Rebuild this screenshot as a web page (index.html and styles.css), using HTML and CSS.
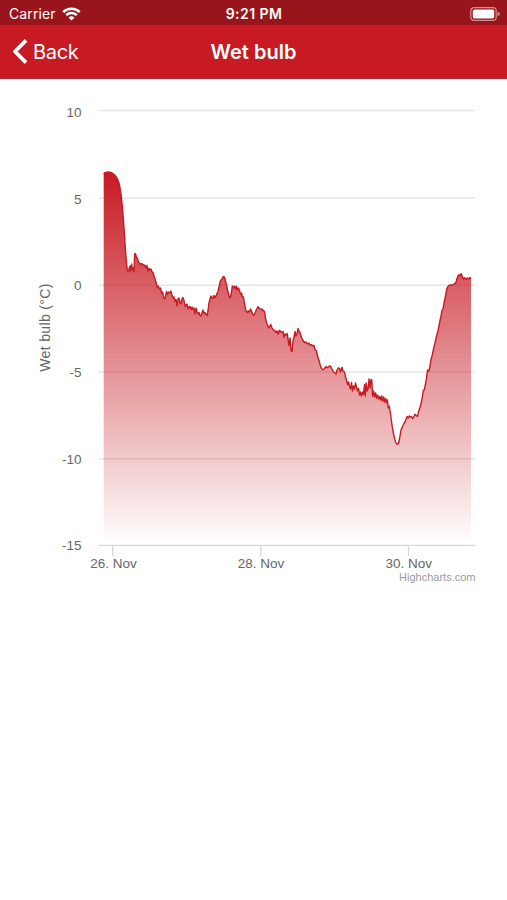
FILE: index.html
```html
<!DOCTYPE html>
<html lang="en">
<head>
  <meta charset="UTF-8" />
  <meta name="viewport" content="width=device-width, initial-scale=1.0" />
  <title>Wet bulb</title>
  <link rel="stylesheet" href="styles.css">
</head>
<body>

  <!-- Status bar -->
  <div class="status-bar">
    <div class="carrier">
      <span>Carrier</span>
      <svg class="wifi" width="19" height="14" viewBox="0 0 19 14">
        <path d="M1.2 5.1 A11.8 11.8 0 0 1 17.8 5.1" />
        <path d="M4.2 8.1 A7.6 7.6 0 0 1 14.8 8.1" />
        <path class="wifi-dot" d="M6.5 10.6 A4.3 4.3 0 0 1 12.5 10.6 L9.5 13.6 Z" />
      </svg>
    </div>
    <span class="clock">9:21 PM</span>
    <svg class="battery" width="31" height="14" viewBox="0 0 31 14">
      <rect class="battery-case" x="0.8" y="0.7" width="25.4" height="12.6" rx="3.4" />
      <rect x="2.8" y="2.6" width="21.4" height="8.8" rx="1.6" />
      <path class="battery-tip" d="M27.5 4.8 Q29.9 5.4 29.9 7 Q29.9 8.6 27.5 9.2 Z" />
    </svg>
  </div>

  <header class="nav-bar">
    <a class="back" href="#">
      <svg width="17" height="27" viewBox="0 0 17 27">
        <path d="M14 2.4 L3 13.5 L14 24.6" />
      </svg>
      <span>Back</span>
    </a>
    <h1>Wet bulb</h1>
  </header>

  <main>
    <svg class="chart" width="507" height="521" viewBox="0 79 507 521">
      <defs>
        <linearGradient id="fill" gradientUnits="userSpaceOnUse" x1="0" y1="172" x2="0" y2="545">
          <stop offset="0" stop-color="#c71a22" />
          <stop offset="1" stop-color="#c71a22" stop-opacity="0" />
        </linearGradient>
      </defs>

      <path class="grid" d="M99 110.5H475 M99 198.2H475 M99 285.2H475 M99 372H475 M99 458.7H475" />

      <path id="area" class="area" />
      <path id="line" class="line" />

      <path class="axis" d="M99 545.3H475 M112.7 545V556 M260.8 545V556 M408.5 545V556" />

      <g class="y-labels">
        <text x="81.5" y="117">10</text>
        <text x="81.5" y="203.5">5</text>
        <text x="81.5" y="290">0</text>
        <text x="81.5" y="377">-5</text>
        <text x="81.5" y="463.5">-10</text>
        <text x="81.5" y="550">-15</text>
      </g>
      <g class="x-labels">
        <text x="113.5" y="567.5">26. Nov</text>
        <text x="261" y="567.5">28. Nov</text>
        <text x="408.7" y="567.5">30. Nov</text>
      </g>
      <text class="axis-title" transform="translate(50 371.7) rotate(-90)" textLength="88">Wet bulb (°C)</text>
      <text class="credits" x="475.5" y="581">Highcharts.com</text>
    </svg>
  </main>

  <script>
    // x,y of each reading
    const points = `
      103.7,174 105,172.6 108,171.9 111,172.4 114,174.5 116,176.5 118,180 119.5,185
      121,194 122.3,206 123.5,220 124.5,236 125.5,251 126.5,263 127.3,270 128.3,272
      129.3,268 130,266 130.8,271 131.6,264 132.4,269 133.3,268 134,271.5 134.6,254
      135.4,253.5 136.3,257 137.3,258 138.4,262 139.4,263 140.6,264.5 141.6,263.5
      143,264.3 144,266 145,265 146,268 147,265.5 148,271 149,268.5 150,270 151,269
      152,272 153,272.5 154,276 155,279 156.2,283 157.2,287.5 158.2,286 159.5,289
      160.5,288 161.5,293 162.5,292 163.5,296 164.5,299 165.5,297 166.5,291.5
      167.5,294 168.5,292 169.8,293 171,291.2 172,295 173,297.5 174,297 175,301
      176,299.5 177,306 178,299 179,298 180,302.5 181,304 182,299 183,297.5
      184,300.5 185,306.5 186,305 187,304 188,309 189,307 190,306.5 191,309.5
      192,307 193,309.5 194,308 195,314 196,308 197,312 198,314 199,312.5 200,315.5
      201,316 202,313 203,310 204,313.5 205,312.5 206,314.5 207,315.5 208,311
      209,303 210,299 211,296 212,297.5 213,298.5 214,295.5 215,297.5 216,296
      217,293.5 218,291.5 219,287 220,282 221,279.8 222,279.2 223,276.8 224.5,277
      225.5,281 226.5,285 227.5,290 228.5,294 229.5,297.5 230.5,297 231.5,292
      232.3,286 233.5,288 234.5,286 235.5,289 236.5,286.3 237.5,290 238.5,288
      239.5,290.5 240.5,294 241.5,293 242.5,297 243.5,297 244.5,304 245.5,309
      246.5,311.5 247.5,312.5 248.5,311 249.5,312 250.5,309 251.5,311 252.5,314
      253.8,315.5 255,313 256,310.5 257,308.5 258,306.8 259.5,308.5 261,309.5
      262,309 263,310.5 264,311 264.8,313 265.6,319 266.6,323 267.6,325 268.6,328
      269.8,326.5 270.8,324.5 271.8,327.5 273,329.5 274.5,330.5 276,332.5 277,331
      278.2,334 279.2,330.5 280.3,331 281.5,332.3 283,331.5 284,337 285,334
      286,335 287.2,333.5 288,339 289,345.5 290,338 291,350.5 292,351.5 293,341
      294,337 295,331.5 296,336 297,334 298,328.5 299,331 300,332.5 301,336
      302,338.5 303,340.5 304.5,342.5 306,342 307.5,344 309,343 310,345.5
      311.5,344.5 313,346 314,345.5 315,349.5 316.5,351 317.5,356 319,360.5
      320.2,365 321.5,368.5 323,369.7 324.5,368.5 326,366.5 327.5,367.7 329,366.5
      330.5,366 332,369 333.5,372 335,373 336,374 337,370 338.3,367.8 339.5,368.5
      340.5,372 342,367.3 343,371 344.5,372 345.5,377 346.5,380 347.5,384.5
      348.5,382 349.5,386 350.5,389 351.5,382.5 352.5,391 353.5,386 354.5,389
      355.5,383 356.5,387 357.5,391 358.5,388.5 359.5,395 360.5,392 361.5,396
      362.5,392 363.5,394.5 364.5,384.5 365.3,396 366.2,383 367.2,391 368.2,388
      369,379 370,388 371,379.5 371.8,380 372.6,396 373.6,391 374.6,397 375.6,393
      376.6,398 377.6,395 378.6,399 379.6,396.5 380.6,400 381.6,396 382.6,401
      383.6,397 384.6,402 385.6,398.5 386.6,403 387.4,400 388.2,408 389.2,406
      390.2,412 391.2,419 392,425 393,431 394.2,437 395.6,442 397,444.3 398.5,443.5
      399.7,438 401,430 402.3,427 403.7,424 405,422 406,419.5 407.2,416.5
      408.3,418 409.3,416 410.3,417 411.3,416.5 412.5,418.5 414,416.5 415,414.3
      416.2,415.5 417.5,416.5 418.5,412 419.8,408 421,404 422.2,398 423.3,390.5
      424.3,390 425.5,384 426.5,378 427.5,370 429,371 430,366 431,359.5 432.3,355
      433.5,349 435,343 436.5,336 438,331 439.5,323 441,316 442,310.5 443.2,308
      444.2,302 445.5,296 446.5,290.5 447.5,287 449,285.5 451,285 453,284.8
      454.5,283.5 455.7,283.3 457,278.5 458,276 459,274.8 460,276 461.3,273.7
      462.3,276.5 463.5,279 464.7,277.8 466,279.3 467.5,278 469,279 470,277.5
      471,278.8`.trim().split(/\s+/);

    const d = 'M' + points.join(' L');
    document.getElementById('line').setAttribute('d', d);
    document.getElementById('area').setAttribute('d', d + ' L471,545 L103.7,545 Z');
  </script>
</body>
</html>
```
FILE: styles.css
```css
* { box-sizing: border-box; margin: 0; padding: 0; }

body {
  background: white;
  font-family: Inter, sans-serif;
  color: white;
}

.status-bar {
  display: grid;
  grid-template-columns: 1fr auto 1fr;
  align-items: center;
  height: 25px;
  padding: 2px 6px 0 7px;
  background: #98161b;
  font-size: 14px;
}

.carrier {
  display: flex;
  align-items: center;
  gap: 6px;
  padding-left: 2px;
  letter-spacing: 0.1px;
}

.wifi {
  fill: none;
  stroke: white;
  stroke-width: 2.4;
}

.wifi-dot {
  fill: white;
  stroke: none;
}

.clock {
  font-size: 14px;
  font-weight: 600;
  letter-spacing: 0.45px;
}

.battery {
  justify-self: end;
  fill: white;
}

.battery-case {
  fill: none;
  stroke: #d58d91;
  stroke-width: 1.2;
}

.battery-tip {
  fill: #d58d91;
}

.nav-bar {
  display: grid;
  grid-template-columns: 1fr auto 1fr;
  align-items: center;
  height: 54px;
  padding: 0 12px;
  background: #c71a22;
  border-bottom: 1px solid #b8242b;
}

.back {
  display: flex;
  align-items: center;
  gap: 4px;
  color: white;
  font-size: 20px;
  letter-spacing: -0.3px;
  text-decoration: none;
}

.back svg {
  fill: none;
  stroke: white;
  stroke-width: 3.8;
  stroke-linejoin: round;
}

h1 {
  font-size: 20px;
  font-weight: 600;
}

.chart {
  display: block;
  font-family: "Liberation Sans", Arial, sans-serif;
  font-size: 13.5px;
  fill: #666;
}

.grid {
  stroke: #e6e6e6;
  stroke-width: 1.4;
}

.area {
  fill: url(#fill);
}

.line {
  fill: none;
  stroke: #c71a22;
  stroke-width: 1.4;
  stroke-linejoin: round;
}

.axis {
  fill: none;
  stroke: #d3d6ee;
  stroke-width: 1.3;
}

.y-labels {
  text-anchor: end;
}

.x-labels {
  text-anchor: middle;
}

.axis-title {
  font-size: 14px;
}

.credits {
  font-size: 11px;
  fill: #999;
  text-anchor: end;
}
```
